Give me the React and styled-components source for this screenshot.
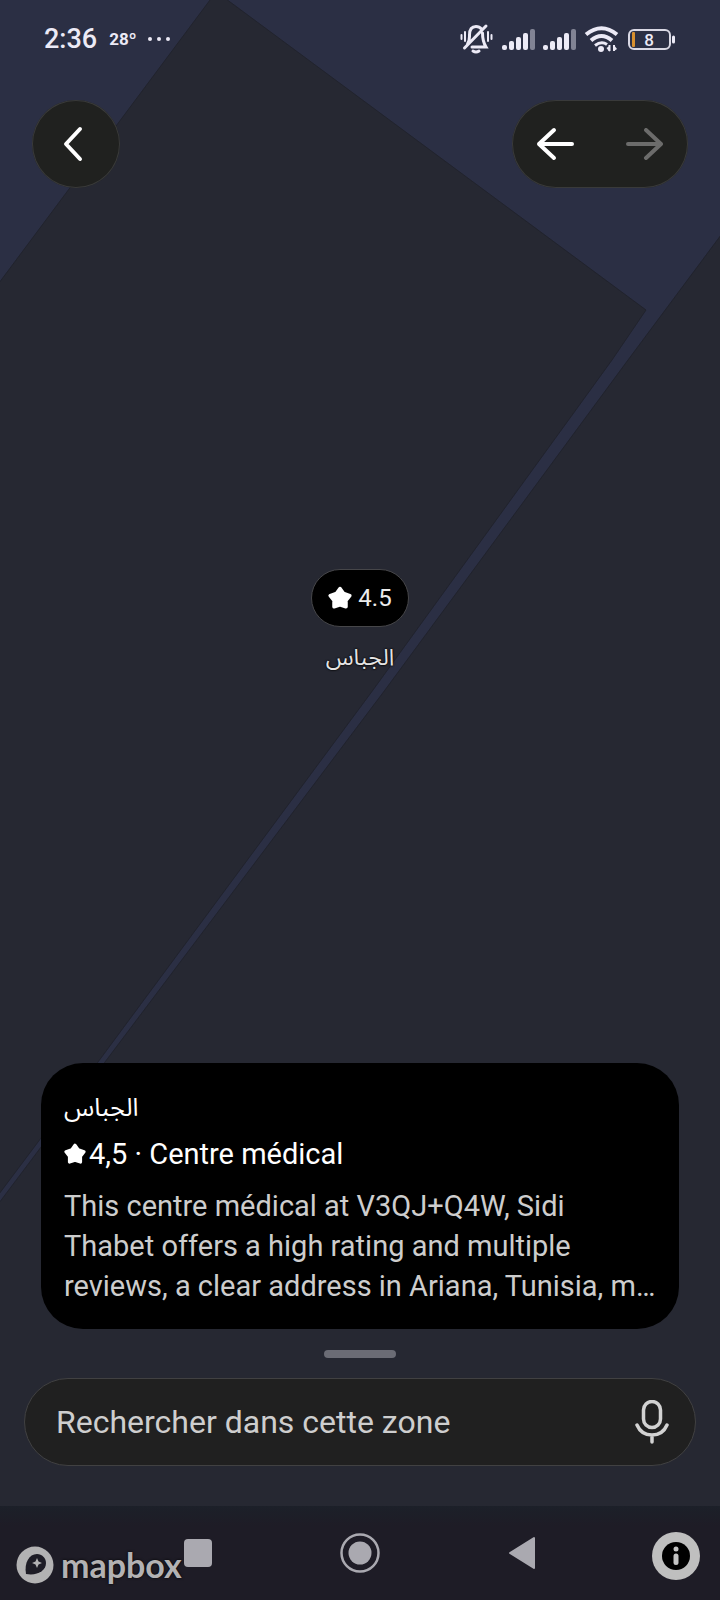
import React from "react";
import styled, { createGlobalStyle } from "styled-components";

const App = () => {
	return (
		<>
			<GlobalStyle />
			<Screen>
				<MapShapes viewBox="0 0 720 1600" preserveAspectRatio="xMidYMin slice">
					<Area d="M-4 -4H213L-4 287Z" />
					<Area d="M222 -4L646 310L612 360L373 690L98 1062L-4 1198V1207L105 1062L385 690L628 360L724 231V-4Z" />
				</MapShapes>
				<Marker>
					<Pill>
						<Star size={24} />
						4.5
					</Pill>
					<MarkerName lang="ar">الجباس</MarkerName>
				</Marker>

				<StatusBar>
					<Time>2:36</Time>
					<Temperature>28º</Temperature>
					<Dots />
					<StatusIcons />
				</StatusBar>

				<TopBar>
					<RoundButton aria-label="Retour">
						<svg width="88" height="88" viewBox="0 0 88 88">
							<Stroke d="M48 29L34 44L48 59" $width={4} />
						</svg>
					</RoundButton>
					<History>
						<HistoryButton aria-label="Précédent">
							<ArrowIcon />
						</HistoryButton>
						<HistoryButton aria-label="Suivant" disabled $flip>
							<ArrowIcon />
						</HistoryButton>
					</History>
				</TopBar>

				<Sheet>
					<Card>
						<Title lang="ar">الجباس</Title>
						<Rating>
							<Star size={22} />
							4,5 · Centre médical
						</Rating>
						<Description>
							This centre médical at V3QJ+Q4W, Sidi
							<br />
							Thabet offers a high rating and multiple
							<br />
							reviews, a clear address in Ariana, Tunisia, m…
						</Description>
					</Card>
					<Handle />
					<Search>
						<SearchInput
							aria-label="Rechercher dans cette zone"
							placeholder="Rechercher dans cette zone"
						/>
						<MicButton aria-label="Recherche vocale">
							<MicIcon />
						</MicButton>
					</Search>
				</Sheet>

				<NavBar>
					<NavButton aria-label="Applications récentes">
						<svg width="28" height="28">
							<rect width="28" height="28" rx="4" fill="#aaa9b0" />
						</svg>
					</NavButton>
					<NavButton aria-label="Accueil">
						<svg width="40" height="40" viewBox="0 0 40 40">
							<circle cx="20" cy="20" r="18.500" fill="none" stroke="#aaa9b0" strokeWidth="2.500" />
							<circle cx="20" cy="20" r="11.500" fill="#aaa9b0" />
						</svg>
					</NavButton>
					<NavButton aria-label="Retour système">
						<svg width="28" height="34" viewBox="0 0 28 34">
							<path
								d="M2 17L26 2V32Z"
								fill="#aaa9b0"
								stroke="#aaa9b0"
								strokeWidth="2"
								strokeLinejoin="round"
							/>
						</svg>
					</NavButton>
					<Attribution href="#mapbox">
						<MapboxMark />
						mapbox
					</Attribution>
					<InfoButton aria-label="Informations">
						<svg width="48" height="48" viewBox="0 0 48 48">
							<circle cx="24" cy="24" r="24" fill="#bfbfbf" />
							<circle cx="24" cy="24" r="14" fill="#000" />
							<circle cx="24" cy="17" r="2.500" fill="#c4c4c4" />
							<path d="M24 24V30.500" stroke="#c4c4c4" strokeWidth="5" strokeLinecap="round" />
						</svg>
					</InfoButton>
				</NavBar>
			</Screen>
		</>
	);
};

const Star = ({ size }) => (
	<svg width={size} height={size} viewBox="0 0 24 24">
		<path
			d="M12 2.500L15.600 7.500L21.800 9.600L18 14.500L18 20.800L12 18.800L6 20.800L6 14.500L2.200 9.600L8.400 7.500Z"
			fill="currentColor"
			stroke="currentColor"
			strokeWidth="3.500"
			strokeLinejoin="round"
		/>
	</svg>
);

const ArrowIcon = () => (
	<svg width="88" height="88" viewBox="0 0 88 88">
		<Stroke d="M42 30L27 44L42 58M27 44H60" $width={4} />
	</svg>
);

const MicIcon = () => (
	<svg width="34" height="44" viewBox="0 0 34 44">
		<rect x="8.500" y="1.500" width="17" height="26" rx="8.500" fill="none" stroke="currentColor" strokeWidth="3.500" />
		<Stroke d="M2 25C5 32 10 35 17 35S29 32 32 25M17 35V42" $width={3.5} />
	</svg>
);

const MapboxMark = () => (
	<svg width="38" height="38" viewBox="0 0 38 38">
		<circle cx="19" cy="19" r="18.500" fill="#b3b2b3" />
		<path d="M10 28C8 17 13 8 21 8C26 8 30 12 30 17C30 25 21 30 10 28Z" fill="#1e1c26" />
		<path d="M21 12L22.500 15.500L26 17L22.500 18.500L21 22L19.500 18.500L16 17L19.500 15.500Z" fill="#b3b2b3" />
	</svg>
);

const Bars = ({ x }) => (
	<g fill="#eceaf6">
		<rect x={x} y="27" width="5" height="5" rx="2" />
		<rect x={x + 7} y="23" width="5" height="9" rx="2" />
		<rect x={x + 14} y="19" width="5" height="13" rx="2" />
		<rect x={x + 21} y="15" width="5" height="17" rx="2" />
		<rect x={x + 28} y="11" width="5" height="21" rx="2" opacity="0.450" />
	</g>
);

const StatusIcons = () => (
	<svg width="216" height="36" viewBox="0 3 216 36">
		<g fill="none" stroke="#eceaf6" strokeWidth="3" strokeLinecap="round">
			{/* muted bell */}
			<path d="M7.500 26C10 22 9.500 20 9.500 17C9.500 11 12 8.500 16 8.500C18 8.500 20 9.200 21.500 11M22.500 15C22.500 21 23 24 26 29H12M4.500 30L26 8" />
			<path d="M1.500 17V21M5 14V23M28 14V23M31.500 17V21" strokeWidth="2" />
			<path d="M13 33Q16 35 19 33" />
		</g>
		<Bars x={42} />
		<Bars x={83} />
		<g fill="none" stroke="#eceaf6" strokeWidth="4">
			<path d="M126 16.500Q141.500 4 157 16.500" />
			<path d="M131 22.500Q141.500 13.500 152 22.500" />
			<path d="M135 27.500Q141.500 22.500 147 26.500" strokeWidth="3" />
		</g>
		<circle cx="141" cy="31" r="3" fill="#eceaf6" />
		<path d="M149.500 27V33M154 27V33" stroke="#eceaf6" strokeWidth="2" />
		<path d="M146.500 30L149.500 34V28ZM157 31L154 27V33Z" fill="#eceaf6" />
		<rect x="169" y="12" width="41" height="19" rx="5" fill="none" stroke="#d9d8e4" strokeWidth="2" />
		<rect x="172" y="14" width="3" height="15" rx="1" fill="#d8902f" />
		<path d="M213.500 19V24" stroke="#eceaf6" strokeWidth="3" strokeLinecap="round" />
		<BatteryLevel x="189" y="28">
			8
		</BatteryLevel>
	</svg>
);

const GlobalStyle = createGlobalStyle`
	* {
		box-sizing: border-box;
	}

	body {
		margin: 0;
		background: #262832;
		font-family: Roboto, "Noto Sans Arabic", "DejaVu Sans", sans-serif;
	}

	button {
		display: flex;
		align-items: center;
		justify-content: center;
		margin: 0;
		padding: 0;
		border: 0;
		background: none;
		color: #fff;
	}

	svg {
		display: block;
		flex-shrink: 0;
	}
`;

const Screen = styled.main`
	position: relative;
	display: flex;
	flex-direction: column;
	min-height: 100vh;
	overflow: hidden;
	background: #262832;
`;

const MapShapes = styled.svg`
	position: absolute;
	inset: 0;
	width: 100%;
	height: 100%;
`;

const Area = styled.path`
	fill: #2b2f44;
	stroke: #21232d;
	stroke-width: 1;
`;

const Marker = styled.div`
	position: absolute;
	top: 569px;
	left: 0;
	right: 0;
	display: flex;
	flex-direction: column;
	align-items: center;
	gap: 12px;
`;

const Pill = styled.div`
	display: flex;
	align-items: center;
	gap: 6px;
	height: 58px;
	padding: 0 16px;
	border: 1px solid #464649;
	border-radius: 29px;
	background: #000;
	color: #ececec;
	font-size: 24px;

	svg {
		color: #fff;
	}
`;

const MarkerName = styled.div`
	color: #e4e4e4;
	font-size: 23px;
	line-height: 38px;
	text-shadow: 0 0 2px #000, 0 0 2px #000;
`;

const StatusBar = styled.header`
	position: relative;
	display: flex;
	align-items: center;
	height: 78px;
	padding: 0 44px;
	color: #eceaf6;
`;

const Time = styled.span`
	margin-right: 12px;
	font-size: 27px;
	font-weight: 500;
`;

const Temperature = styled.span`
	margin-right: 12px;
	font-size: 17px;
	font-weight: 700;
`;

const Dots = styled.span`
	width: 4px;
	height: 4px;
	margin-right: auto;
	border-radius: 50%;
	background: currentColor;
	box-shadow: 9px 0 currentColor, 18px 0 currentColor;
`;

const BatteryLevel = styled.text`
	fill: #eceaf6;
	font-size: 17px;
	font-weight: 500;
	text-anchor: middle;
`;

const Stroke = styled.path`
	fill: none;
	stroke: currentColor;
	stroke-width: ${(props) => props.$width}px;
	stroke-linecap: round;
	stroke-linejoin: round;
`;

const TopBar = styled.nav`
	position: relative;
	display: flex;
	justify-content: space-between;
	padding: 22px 32px;
`;

const RoundButton = styled.button`
	width: 88px;
	height: 88px;
	border-radius: 50%;
	background: #20211f;
	box-shadow: inset 0 0 0 1px #393a3a;
`;

const History = styled.div`
	display: flex;
	border-radius: 44px;
	background: #20211f;
	box-shadow: inset 0 0 0 1px #393a3a;
`;

const HistoryButton = styled.button`
	width: 88px;
	height: 88px;
	transform: ${(props) => (props.$flip ? "scaleX(-1)" : "none")};

	&:disabled {
		color: #6c6c6b;
	}
`;

const Sheet = styled.section`
	position: relative;
	display: flex;
	flex-direction: column;
	margin-top: auto;
	padding: 0 24px 40px;
`;

const Card = styled.article`
	margin: 0 17px;
	padding: 25px 23px 23px;
	border-radius: 42px;
	background: #000;
	color: #fff;
	font-size: 29px;
	line-height: 40px;
`;

const Title = styled.h2`
	margin: 0 0 6px;
	height: 40px;
	font-size: 25px;
	font-weight: 400;
`;

const Rating = styled.div`
	display: flex;
	align-items: center;
	gap: 3px;
	margin-bottom: 12px;
`;

const Description = styled.p`
	margin: 0;
	color: #cdcdcd;
`;

const Handle = styled.div`
	width: 72px;
	height: 8px;
	margin: 21px auto 20px;
	border-radius: 4px;
	background: #6b6c75;
`;

const Search = styled.div`
	display: flex;
	align-items: center;
	height: 88px;
	padding: 0 16px 0 31px;
	border: 1px solid #414142;
	border-radius: 44px;
	background: #202020;
`;

const SearchInput = styled.input`
	flex: 1;
	min-width: 0;
	padding: 0;
	border: 0;
	outline: 0;
	background: none;
	color: #cecece;
	font-family: inherit;
	font-size: 32px;

	&::placeholder {
		color: #cecece;
		opacity: 1;
	}
`;

const MicButton = styled.button`
	&& {
		width: 54px;
		height: 54px;
		color: #d2d2d2;
	}
`;

const NavBar = styled.footer`
	position: relative;
	display: flex;
	justify-content: center;
	height: 94px;
	background: linear-gradient(#1c2029, #1e1c26 20px);
`;

const NavButton = styled.button`
	width: 162px;
	height: 94px;
`;

const Attribution = styled.a`
	position: absolute;
	left: 16px;
	bottom: 16px;
	display: flex;
	align-items: center;
	gap: 7px;
	color: #b3b2b3;
	font-family: Lato, sans-serif;
	font-size: 34px;
	font-weight: 700;
	line-height: 36px;
	text-decoration: none;
	text-shadow: 0 0 3px #000;
`;

const InfoButton = styled.button`
	position: absolute;
	right: 20px;
	bottom: 20px;
`;

export default App;
